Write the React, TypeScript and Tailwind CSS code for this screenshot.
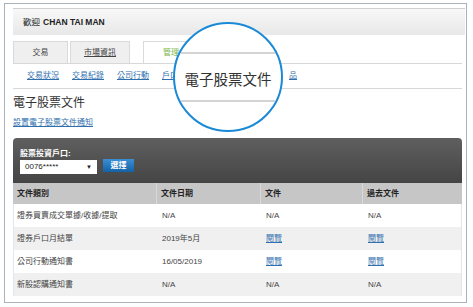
import React from "react";

const font = { fontFamily: '"Liberation Sans", "Noto Sans CJK TC", sans-serif' };

const rows = [
  { type: "證券買賣成交單據/收據/提取", date: "N/A", doc: null, past: null, bg: "bg-white" },
  { type: "證券戶口月結單", date: "2019年5月", doc: "閱覽", past: "閱覽", bg: "bg-[#f0f0f0]" },
  { type: "公司行動通知書", date: "16/05/2019", doc: "閱覽", past: "閱覽", bg: "bg-white" },
  { type: "新股認購通知書", date: "N/A", doc: null, past: null, bg: "bg-[#f0f0f0]" },
];

function Cell({ v }: { v: string | null }) {
  if (v === null) return <span className="text-[#444]">N/A</span>;
  return <span className="text-[#2f6fae] underline">{v}</span>;
}

export default function App() {
  return (
    <div className="relative w-[473px] h-[307px] bg-white overflow-hidden" style={font}>
      <div className="ml-[4px] mt-[3px] w-[463px] h-[300px] border border-[#a9b2bd] flex flex-col">
        {/* header */}
        <div className="mt-[4px] ml-[8px] mr-[1px] h-[27px] border-t border-[#cfcfcf] bg-gradient-to-b from-[#f8f8f8] to-[#e8e8e8] flex items-center pl-[10px] text-[8.5px] text-[#222]">
          <span className="mr-[3px]">歡迎</span>
          <span className="font-bold">CHAN TAI MAN</span>
        </div>
        <div className="ml-[8px] mr-[4px] flex flex-col">
          {/* tabs */}
          <div className="mt-[6px] h-[23px] border-b border-[#d8d8d8] flex items-stretch text-[8px] text-[#444]">
            <div className="w-[55px] bg-[#efefef] border border-b-0 border-[#dadada] flex items-center justify-center">交易</div>
            <div className="ml-[2px] w-[60px] bg-[#efefef] border border-b-0 border-[#dadada] flex items-center justify-center underline">市場資訊</div>
            <div className="ml-[13px] w-[90px] bg-white border border-b-0 border-[#dadada] flex items-center pl-[19px] text-[#7ab648]">管理</div>
          </div>
          {/* submenu */}
          <div className="h-[25px] border-b border-[#d8d8d8] flex items-center pl-[14px] gap-[13px] text-[8px] text-[#2f6fae] underline">
            <span>交易狀況</span>
            <span>交易紀錄</span>
            <span>公司行動</span>
            <span>戶口</span>
            <span className="w-[85px]" />
            <span>品</span>
          </div>
          {/* title */}
          <div className="mt-[7px] text-[12px] leading-[14px] text-[#333]">電子股票文件</div>
          <div className="mt-[8px] text-[8px] leading-[10px] text-[#2f6fae] underline">設置電子股票文件通知</div>
          {/* dark panel */}
          <div className="mt-[10px] h-[45px] rounded-t-[4px] bg-gradient-to-b from-[#5f5f5f] to-[#454545] pl-[7px] pt-[11px]">
            <div className="text-[8px] leading-[9px] font-bold text-white">股票投資戶口:</div>
            <div className="mt-[1px] flex items-start">
              <div className="mt-[1px] w-[77px] h-[14px] bg-white flex items-center justify-between px-[5px] text-[8px] text-[#222]">
                <span>0076*****</span>
                <span className="text-[6px]">▼</span>
              </div>
              <div className="ml-[6px] w-[31px] h-[13px] bg-gradient-to-b from-[#3a8fd4] to-[#1262a8] flex items-center justify-center text-[8px] font-bold text-white">選擇</div>
            </div>
          </div>
          {/* table */}
          <div className="text-[8px]">
            <div className="h-[21px] bg-[#c6c6c6] flex items-center font-bold text-[#222]">
              <div className="w-[144px] h-full flex items-center pl-[4px] border-r border-[#d9d9d9]">文件類別</div>
              <div className="w-[104px] h-full flex items-center pl-[4px] border-r border-[#d9d9d9]">文件日期</div>
              <div className="w-[102px] h-full flex items-center pl-[4px] border-r border-[#d9d9d9]">文件</div>
              <div className="flex-1 h-full flex items-center pl-[4px]">過去文件</div>
            </div>
            {rows.map((r, i) => (
              <div key={i} className={`h-[23px] flex items-center border-x border-[#e6e6e6] ${r.bg}`}>
                <div className="w-[144px] pl-[3px] text-[#444]">{r.type}</div>
                <div className="w-[104px] pl-[4px] text-[#444]">{r.date}</div>
                <div className="w-[102px] pl-[4px]"><Cell v={r.doc} /></div>
                <div className="flex-1 pl-[4px]"><Cell v={r.past} /></div>
              </div>
            ))}
          </div>
        </div>
      </div>

      {/* magnifier */}
      <div className="absolute left-[173px] top-[22px] w-[110px] h-[110px] rounded-full border-2 border-[#1a8ad6] bg-white overflow-hidden">
        <div className="absolute left-0 right-0 top-[28px] h-[2px] bg-[#d4d4d4]" />
        <div className="absolute left-0 right-0 top-[76px] h-[2px] bg-[#d4d4d4]" />
        <div className="absolute left-0 right-0 top-[45px] flex justify-center text-[14.5px] leading-[20px] text-[#333]" style={{ fontFamily: '"Noto Sans CJK TC", sans-serif' }}>
          電子股票文件
        </div>
      </div>
    </div>
  );
}
